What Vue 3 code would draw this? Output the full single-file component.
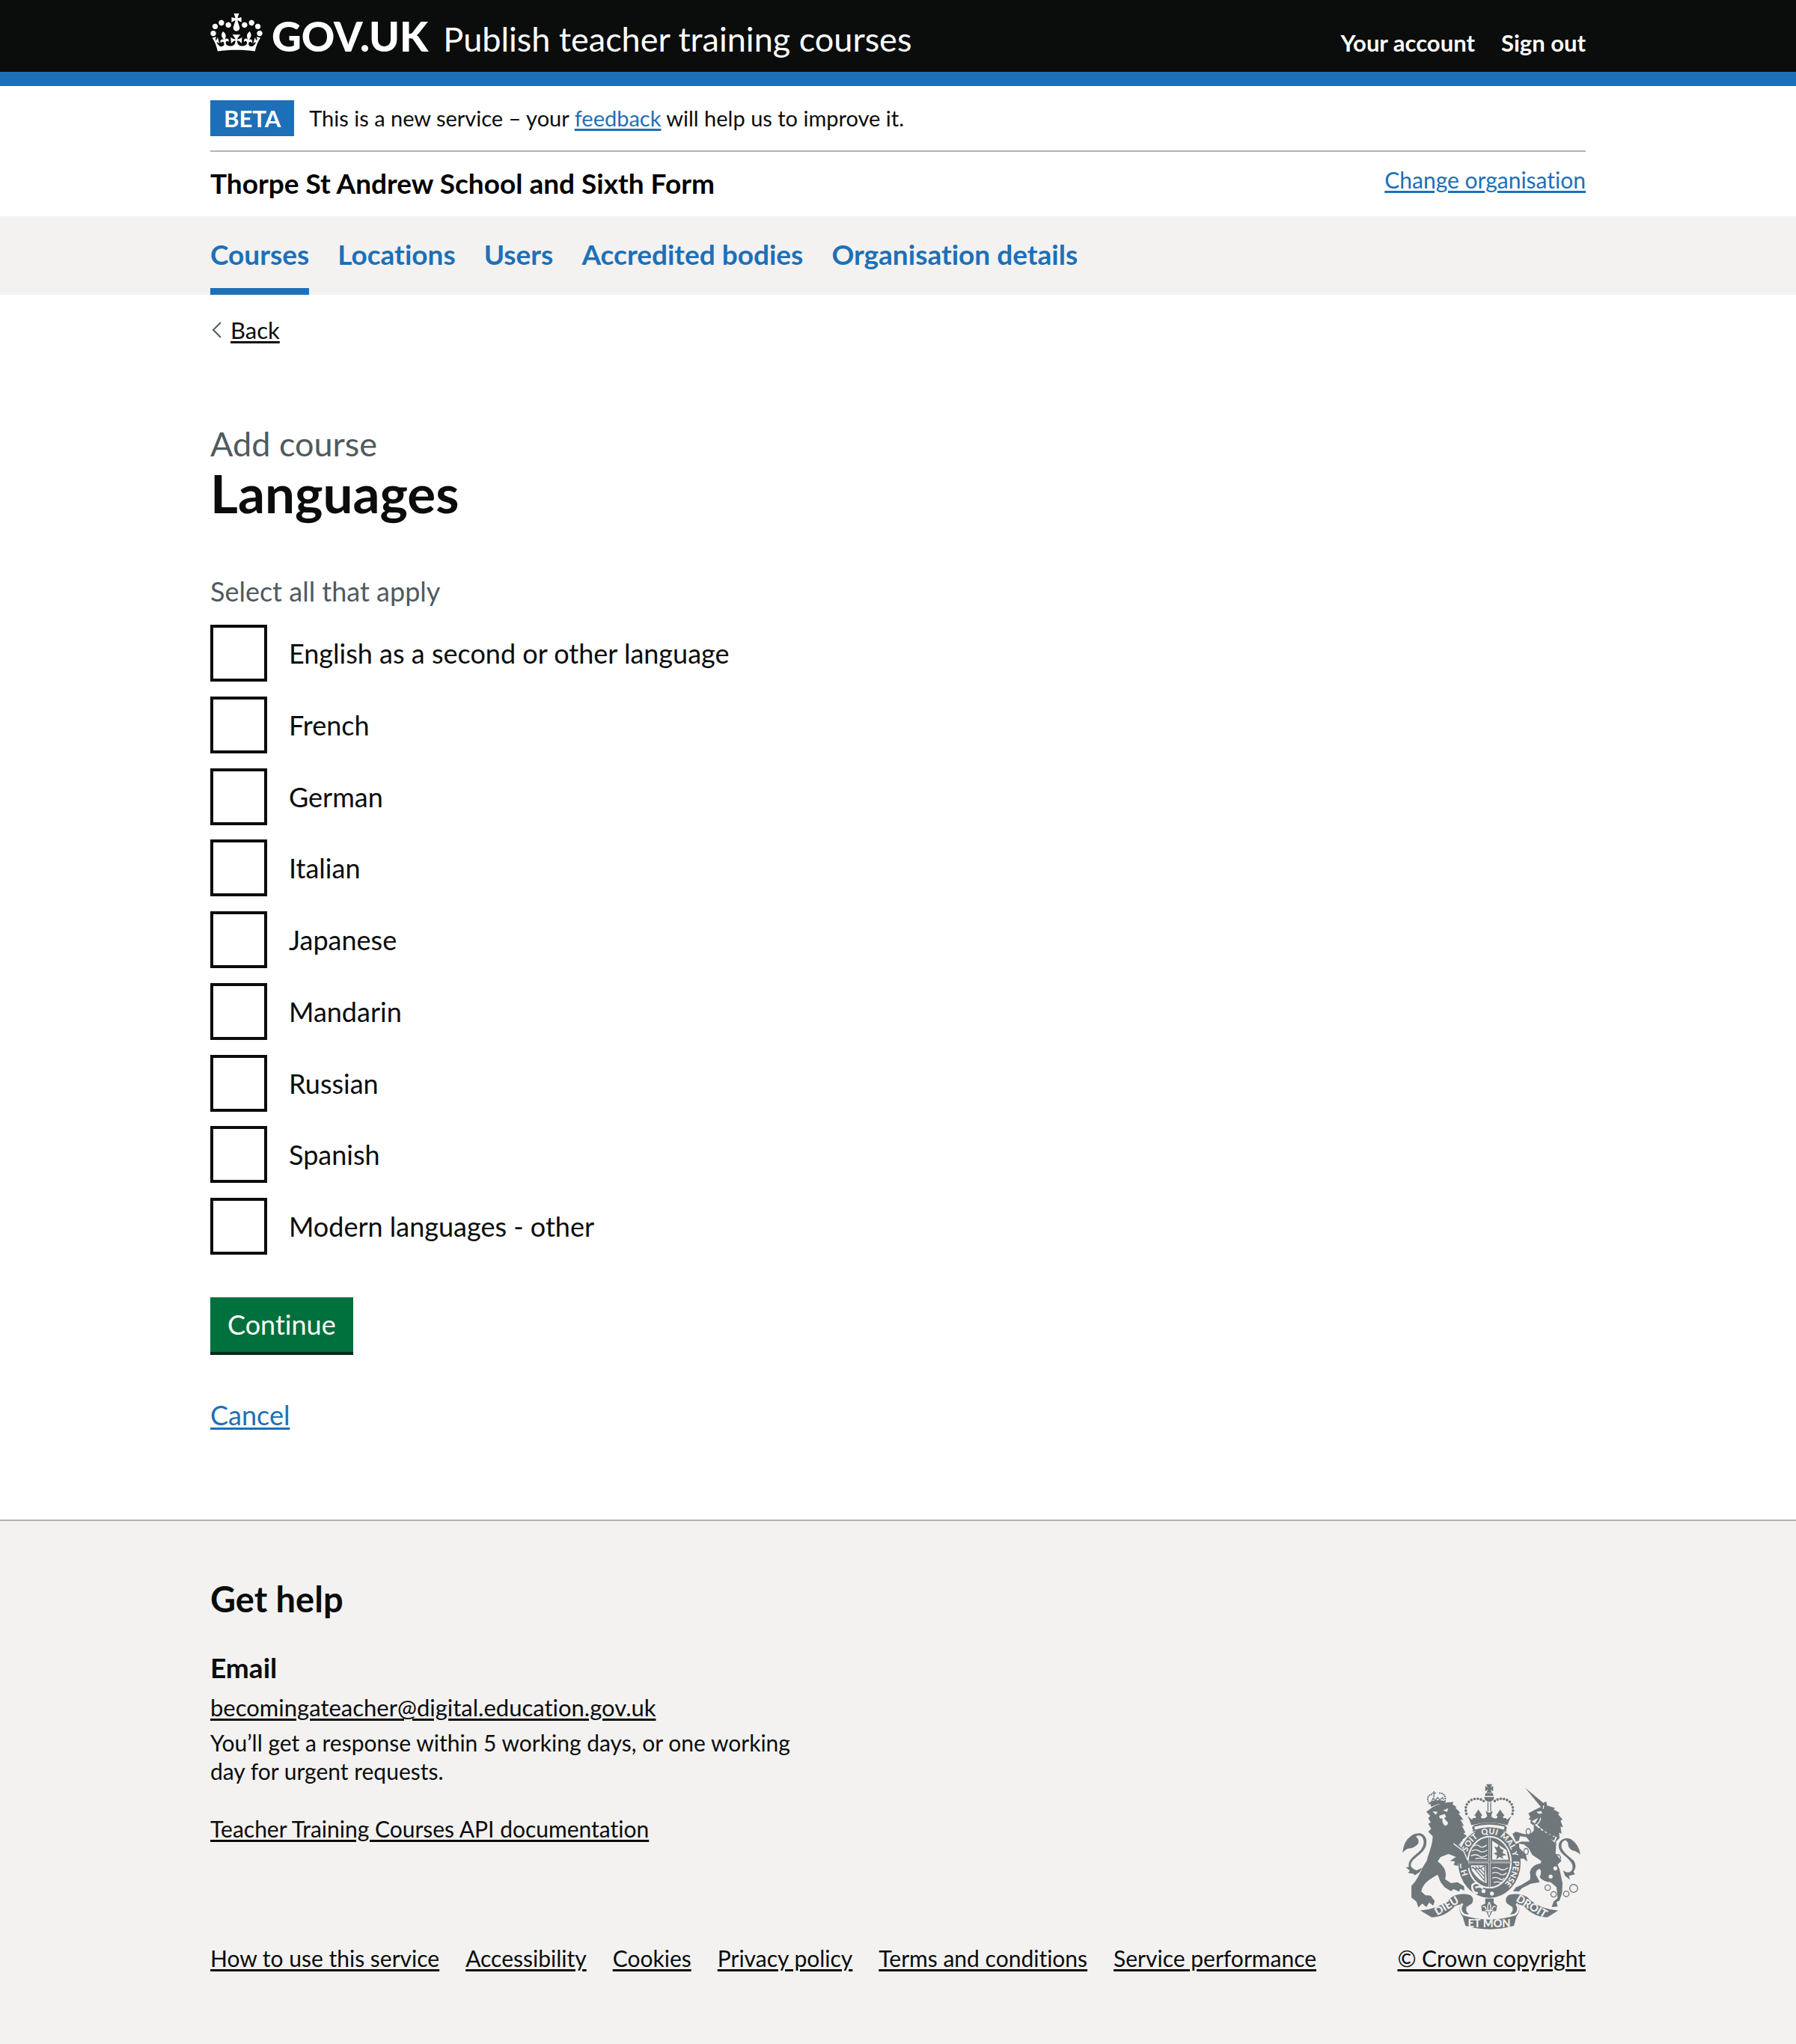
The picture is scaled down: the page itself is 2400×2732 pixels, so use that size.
<script setup>
import { ref } from 'vue'

const sections = ['Courses', 'Locations', 'Users', 'Accredited bodies', 'Organisation details']
const current = ref('Courses')

const languages = [
  'English as a second or other language',
  'French',
  'German',
  'Italian',
  'Japanese',
  'Mandarin',
  'Russian',
  'Spanish',
  'Modern languages - other',
]
const selected = ref([])

const footerLinks = [
  'How to use this service',
  'Accessibility',
  'Cookies',
  'Privacy policy',
  'Terms and conditions',
  'Service performance',
]
</script>

<template>
  <div class="page">
    <header class="header">
      <div class="container header-inner">
        <a href="#" class="logo">
          <svg class="crown" viewBox="0 0 132 97" aria-hidden="true">
            <path fill="currentColor" d="M25 30.2c3.5 1.5 7.7-.2 9.1-3.7 1.5-3.6-.2-7.8-3.9-9.2-3.6-1.4-7.6.3-9.1 3.9-1.4 3.5.3 7.5 3.9 9zM9 39.5c3.6 1.5 7.8-.2 9.2-3.7 1.5-3.6-.2-7.8-3.9-9.1-3.6-1.5-7.6.2-9.1 3.8-1.4 3.5.3 7.5 3.8 9zM4.4 57.2c3.5 1.5 7.7-.2 9.1-3.8 1.5-3.6-.2-7.7-3.9-9.1-3.5-1.5-7.6.3-9.1 3.8-1.4 3.5.3 7.6 3.9 9.1zm38.3-21.4c3.5 1.5 7.7-.2 9.1-3.8 1.5-3.6-.2-7.7-3.9-9.1-3.6-1.5-7.6.3-9.1 3.8-1.3 3.6.4 7.7 3.9 9.1zm64.4-5.6c-3.6 1.5-7.8-.2-9.1-3.7-1.5-3.6.2-7.8 3.8-9.2 3.6-1.4 7.7.3 9.2 3.9 1.3 3.5-.4 7.5-3.9 9zm15.9 9.3c-3.6 1.5-7.7-.2-9.1-3.7-1.5-3.6.2-7.8 3.7-9.1 3.6-1.5 7.7.2 9.2 3.8 1.5 3.5-.3 7.5-3.8 9zm4.7 17.7c-3.6 1.5-7.8-.2-9.2-3.8-1.5-3.6.2-7.7 3.9-9.1 3.6-1.5 7.7.3 9.2 3.8 1.3 3.5-.4 7.6-3.9 9.1zM89.3 35.8c-3.6 1.5-7.8-.2-9.2-3.8-1.4-3.6.2-7.7 3.9-9.1 3.6-1.5 7.7.3 9.2 3.8 1.4 3.6-.3 7.7-3.9 9.1zM69.7 17.7l8.9 4.7V9.3l-8.9 2.8c-.2-.3-.5-.6-.9-.9L72.4 0H59.6l3.5 11.2c-.3.3-.6.5-.9.9l-8.8-2.8v13.1l8.8-4.7c.3.3.6.7.9.9l-5 15.4v.1c-.2.8-.4 1.6-.4 2.4 0 4.1 3.1 7.5 7 8.1h.2c.3 0 .7.1 1 .1.4 0 .7 0 1-.1h.2c4-.6 7.1-4.1 7.1-8.1 0-.8-.1-1.7-.4-2.4V34l-5.1-15.4c.4-.2.7-.6 1-.9zM66 92.8c16.9 0 32.8 1.1 47.1 3.2 4-16.9 8.9-26.7 14-33.5l-9.6-3.4c1 4.9 1.1 7.2 0 10.2-1.5-1.4-3-4.3-4.2-8.7L108.6 76c2.8-2 5-3.2 7.5-3.3-4.4 9.4-10 11.9-13.6 11.2-4.3-.8-6.3-4.6-5.6-7.9 1-4.7 5.7-5.9 8-.5 4.3-8.7-3-11.4-7.6-8.8 7.1-7.2 7.9-13.5 2.1-21.1-8 6.1-8.1 12.3-4.5 20.8-4.7-5.4-12.1-2.5-9.5 6.2 3.4-5.2 7.9-2 7.2 3.1-.6 4.3-6.4 7.8-13.5 7.2-10.3-.9-10.9-8-11.2-13.8 2.5-.5 7.1 1.8 11 7.3L80.2 60c-4.1 4.4-8 5.3-12.3 5.4 1.4-4.4 8-11.6 8-11.6H55.5s6.4 7.2 7.9 11.6c-4.2-.1-8-1-12.3-5.4l1.4 16.4c3.9-5.5 8.5-7.7 10.9-7.3-.3 5.8-.9 12.8-11.1 13.8-7.2.6-12.9-2.9-13.5-7.2-.7-5 3.8-8.3 7.1-3.1 2.7-8.7-4.6-11.6-9.4-6.2 3.7-8.5 3.6-14.7-4.6-20.8-5.8 7.6-5 13.9 2.2 21.1-4.7-2.6-11.9.1-7.7 8.8 2.3-5.5 7.1-4.2 8.1.5.7 3.3-1.3 7.1-5.7 7.9-3.5.7-9-1.8-13.5-11.2 2.5.1 4.7 1.3 7.5 3.3l-4.7-15.4c-1.2 4.4-2.7 7.2-4.3 8.7-1.1-3-.9-5.3 0-10.2l-9.5 3.4c5 6.9 9.9 16.7 14 33.5 14.8-2.1 30.8-3.2 47.7-3.2z" />
          </svg>
          <span class="logo-text">GOV.UK</span>
        </a>
        <a href="#" class="service-name">Publish teacher training courses</a>
        <nav class="account" aria-label="Account">
          <a href="#">Your account</a>
          <a href="#">Sign out</a>
        </nav>
      </div>
    </header>

    <div class="container">
      <div class="phase">
        <strong class="tag">BETA</strong>
        <span>This is a new service – your <a href="#" class="link">feedback</a> will help us to improve it.</span>
      </div>
      <div class="organisation">
        <strong class="organisation-name">Thorpe St Andrew School and Sixth Form</strong>
        <a href="#" class="link">Change organisation</a>
      </div>
    </div>

    <nav class="sections" aria-label="Organisation">
      <div class="container sections-inner">
        <a
          v-for="name in sections"
          :key="name"
          href="#"
          class="section-link"
          :class="{ current: name === current }"
          @click.prevent="current = name"
        >{{ name }}</a>
      </div>
    </nav>

    <main class="container main">
      <a href="#" class="back">
        <svg class="chevron" viewBox="0 0 14 22" aria-hidden="true">
          <path d="M12 1L2 11L12 21" fill="none" stroke="currentColor" stroke-width="2" />
        </svg>
        <span class="back-text">Back</span>
      </a>

      <form @submit.prevent>
        <fieldset class="fieldset" aria-describedby="languages-hint">
          <legend class="legend">
            <span class="caption">Add course</span>
            <h1 class="title">Languages</h1>
          </legend>
          <p id="languages-hint" class="hint">Select all that apply</p>
          <div class="options">
            <div v-for="(name, i) in languages" :key="name" class="option">
              <input :id="`language-${i}`" v-model="selected" type="checkbox" :value="name" class="box" />
              <label :for="`language-${i}`" class="option-label">{{ name }}</label>
            </div>
          </div>
        </fieldset>
        <button type="submit" class="button">Continue</button>
      </form>
      <p class="cancel"><a href="#" class="link">Cancel</a></p>
    </main>

    <footer class="footer">
      <div class="container footer-inner">
        <div class="footer-main">
          <h2 class="help-title">Get help</h2>
          <h3 class="email-title">Email</h3>
          <p class="email"><a href="#" class="footer-link">becomingateacher@digital.education.gov.uk</a></p>
          <p class="response">You’ll get a response within 5 working days, or one working day for urgent requests.</p>
          <p class="docs"><a href="#" class="footer-link">Teacher Training Courses API documentation</a></p>
          <nav class="footer-nav" aria-label="Support links">
            <a v-for="name in footerLinks" :key="name" href="#" class="footer-link">{{ name }}</a>
          </nav>
        </div>

        <div class="copyright">
          <svg class="arms" viewBox="40 38 722 592" role="img" aria-label="Royal coat of arms">
            <defs>
              <path id="garter-line" d="M393 468 A96 113 0 0 1 393 242 A96 113 0 0 1 393 468" />
            </defs>

            <!-- crown above the shield -->
            <g class="ink">
              <path d="M380 40H404L398 53L408 47V69L398 62L402 74H382L386 62L376 69V47L386 53Z" />
              <path d="M378 76H406L410 88H374ZM372 92H412Q410 110 392 111Q374 110 372 92Z" />
              <path d="M304 168L322 184Q326 172 336 178Q342 168 332 166Q340 156 348 142Q358 156 364 166Q354 170 362 178Q376 180 384 170L378 148L392 156L406 148L400 170Q408 180 422 178Q430 170 420 166Q428 156 436 142Q444 156 454 166Q444 170 450 178Q460 172 464 184L482 168Q472 186 466 206Q392 184 320 206Q314 186 304 168Z" />
              <path d="M330 206Q392 186 456 206L464 216Q458 226 462 232Q392 214 324 232Q330 224 322 216Z" />
            </g>
            <path class="cut" d="M332 212Q392 194 454 212L452 224Q392 206 334 224Z" />
            <path class="beads" d="M300 160C288 118 318 98 344 99Q362 100 374 112M486 160C496 118 466 98 440 99Q422 100 410 112" />
            <path class="line" d="M387 112V150M398 112V150" />

            <!-- garter -->
            <ellipse class="ink" cx="393" cy="357" rx="126" ry="142" />
            <ellipse class="cut" cx="393" cy="355" rx="90" ry="106" />
            <ellipse class="ink" cx="393" cy="355" rx="84" ry="100" />
            <path class="thin-cut" d="M326 292Q340 280 352 290T382 286M322 310Q338 300 352 310T384 306M318 330Q338 320 352 330T384 326M336 342Q350 336 384 342M404 380Q420 372 434 382T468 378M404 400Q420 392 434 402T462 398M404 420Q420 412 434 422T452 418M410 438Q424 432 440 438" />
            <path class="cut" d="M404 268L462 306L470 345H404Z" />
            <path class="ink" d="M412 290L424 296L430 284L438 300L450 306L446 318L462 326L444 330L450 342L434 334L420 344L424 328L410 320L424 314Z" />
            <path class="cut" d="M318 368H378L382 440Q345 428 322 388Z" />
            <path class="line" d="M326 374L372 428M336 372L374 414M348 372L376 400M374 368V434M322 376Q346 392 372 370" />
            <path class="cut-line" d="M393 250V460M304 355H482" />
            <path class="line" d="M393 254V456M308 355H480" />
            <g class="lettering garter-text">
              <text><textPath href="#garter-line" startOffset="21%">HO</textPath></text>
              <text><textPath href="#garter-line" startOffset="37%">SOIT</textPath></text>
              <text><textPath href="#garter-line" startOffset="50%">QUI</textPath></text>
              <text><textPath href="#garter-line" startOffset="62%">MAL</textPath></text>
              <text><textPath href="#garter-line" startOffset="70%">Y</textPath></text>
              <text><textPath href="#garter-line" startOffset="82%">PENSE</textPath></text>
            </g>
            <path class="cut-line" d="M346 440Q318 438 324 462Q330 484 346 478M336 458Q360 448 366 462" />
            <circle class="cut" cx="369" cy="472" r="8" />
            <circle class="cut" cx="403" cy="482" r="8" />

            <!-- lion -->
            <g class="ink">
              <path d="M158 132L152 112Q184 98 216 110L212 120Q184 116 158 132Z" />
              <path d="M138 152L162 134Q200 112 248 112L244 122L260 132L256 136L276 156L268 158L288 184L276 184L290 208L282 208L296 236L288 238L302 250L286 262L274 290L292 312L306 350L312 376L298 386L276 380L290 372L268 352L266 370L248 366L254 352L234 350L258 334L228 322L196 334L184 352C212 372 222 396 214 424L238 440L264 436L290 452L292 470L276 462L270 474L248 464L238 472L212 456L196 436L184 406C150 424 122 444 118 474L134 488L156 490L172 512L166 530L150 518L138 536L122 522L106 538L98 514L78 498V450C108 424 112 388 140 350C150 310 164 284 164 250L146 232L158 220L146 200L156 194L146 178L154 168Z" />
              <path d="M42 318Q46 270 78 248Q92 238 112 238Q144 246 138 284C130 322 84 334 76 362Q72 378 98 388L122 378L110 396L92 408L86 402L64 398L72 390L56 376L68 374C62 344 94 328 116 306Q136 278 122 254Q106 242 96 252Q110 262 106 280Q90 300 66 300Q52 304 42 318Z" />
            </g>
            <path class="cut" d="M164 150L184 152L176 164ZM206 146L226 138L222 152ZM190 168L212 160L218 172L210 178L226 196Q222 212 210 206Q200 190 204 180L192 178Z" />
            <path class="thin-cut" d="M248 280L290 312L304 346M284 270L270 288" />
            <path class="beads small" d="M150 118Q132 84 168 80M214 108Q220 74 184 76" />
            <path class="line" d="M169 68V92M162 76H178M160 108L166 96L174 106L184 94L192 104L204 94L208 104" />

            <!-- unicorn -->
            <g class="ink">
              <path d="M536 54L616 120L602 134Z" />
              <path d="M550 158L576 144L604 130Q608 114 622 110L626 126L658 136L652 142L676 156L670 162L688 182L680 188L690 214L680 212L684 240L674 236L676 258L662 272L662 290L660 320L684 350L668 364L676 384L688 440L686 480L676 510L664 516L668 534L644 536L652 514L668 500L664 456L640 436Q612 434 596 416Q606 392 596 382Q580 384 580 404L596 436L560 442L524 460L512 474L488 472L500 456L520 448L556 426Q560 416 556 396Q562 366 600 360L602 350L566 326L552 300L534 284L512 280L514 298L540 324L546 352L530 340L518 342L498 300L500 282L520 272L556 272L542 254L516 250L512 268L500 272L486 240L500 232L528 240L554 244L572 228L572 206L590 176L564 190L578 200L568 206L558 196L560 184L550 182L558 174Z" />
              <path d="M760 326Q754 282 722 262Q698 252 680 268Q664 288 680 312C694 332 736 352 728 382Q722 398 704 396L690 388L698 410L718 426L714 410L738 404L732 394Q748 372 734 350C714 330 692 318 684 296Q680 272 700 266L710 276Q708 300 730 308Q750 312 760 326Z" />
            </g>
            <path class="cut" d="M576 204L656 276L666 254Q620 238 582 200Z" />
            <path class="ink" d="M584 210L588 220L598 216L604 230L614 224L620 238L632 232L636 246L648 240L650 254L660 250L654 268Q612 252 578 226Z" />
            <path class="cut" d="M582 152L602 148L606 158L594 160Z" />
            <path class="thin-cut" d="M600 176Q596 198 580 206M612 126L610 140" />
            <g class="ring">
              <ellipse cx="550" cy="232" rx="9" ry="12" />
              <ellipse cx="541" cy="312" rx="9" ry="12" />
              <circle cx="668" cy="337" r="12" />
              <circle cx="628" cy="458" r="11" />
              <circle cx="652" cy="485" r="11" />
              <circle cx="703" cy="483" r="11" />
              <circle cx="733" cy="461" r="16" />
            </g>
            <circle class="cut" cx="659" cy="380" r="8" />
            <circle class="cut" cx="640" cy="413" r="8" />

            <!-- motto ribbon -->
            <g class="ink">
              <path d="M114 550Q196 544 240 496Q276 476 316 488Q334 502 322 522L300 536Q296 556 310 564L284 574Q264 548 278 524L254 532Q216 576 160 578L140 566Z" />
              <path d="M670 550Q588 544 546 496Q510 476 470 488Q452 502 464 522L486 536Q490 556 476 564L502 574Q522 548 508 524L532 532Q570 576 626 578L646 566Z" />
              <path d="M280 558Q392 606 506 558L492 612Q392 640 296 612Z" />
              <path d="M376 502H410V520L424 530L420 552L404 554L392 580L380 554L362 552L360 530L376 522Z" />
            </g>
            <path class="cut-line" d="M284 522Q268 548 288 566Q392 600 498 566Q518 548 502 522" />
            <path class="thin-cut" d="M392 516Q380 536 392 568Q404 536 392 516M366 536Q376 528 380 546M418 536Q408 528 404 546M376 550H408" />
            <g class="lettering motto">
              <text transform="translate(228 544) rotate(-31)">DIEU</text>
              <text x="392" y="617">ET MON</text>
              <text transform="translate(556 546) rotate(31)">DROIT</text>
            </g>
          </svg>
          <a href="#" class="footer-link">© Crown copyright</a>
        </div>
      </div>
    </footer>
  </div>
</template>

<style>
body {
  margin: 0;
  background: #f3f2f1;
}
</style>

<style scoped>
.page {
  background: #ffffff;
  color: #0b0c0c;
  font-family: Lato, "Liberation Sans", sans-serif;
  font-size: 30px;
  font-variant-ligatures: none;
  line-height: 38px;
}

p,
h1,
h2,
h3 {
  margin: 0;
}

a {
  color: inherit;
  text-decoration: none;
}

.container {
  box-sizing: border-box;
  width: calc(100% - 64px);
  max-width: 1838px;
  margin: 0 auto;
}

.link,
.footer-link,
.back-text {
  text-decoration: underline;
  text-decoration-thickness: 3px;
  text-underline-offset: 3px;
}

.link {
  color: #1d70b8;
}

.header {
  background: #0b0c0c;
  border-bottom: 19px solid #1d70b8;
  color: #ffffff;
}

.header-inner {
  display: flex;
  align-items: baseline;
  padding: 18px 0 20px;
}

.logo {
  display: flex;
  align-items: baseline;
  gap: 12px;
}

.crown {
  width: 70px;
  height: 51px;
  margin-bottom: -3px;
}

.logo-text {
  font-size: 55px;
  font-weight: 900;
  line-height: 56px;
}

.service-name {
  margin-left: 20px;
  font-size: 45px;
  line-height: 48px;
}

.account {
  display: flex;
  gap: 35px;
  margin-left: auto;
  font-size: 31px;
  font-weight: 700;
  line-height: 36px;
}

.phase {
  display: flex;
  align-items: center;
  gap: 20px;
  padding: 19px 0;
  border-bottom: 2px solid #b1b4b6;
  font-size: 29px;
}

.tag {
  padding: 5px 18px;
  background: #1d70b8;
  color: #ffffff;
  font-size: 31px;
}

.organisation {
  display: flex;
  justify-content: space-between;
  padding: 18px 0 20px;
}

.organisation-name {
  color: #000000;
  font-size: 37px;
  line-height: 48px;
}

.sections {
  background: #f3f2f1;
}

.sections-inner {
  display: flex;
  gap: 38px;
}

.section-link {
  padding: 27px 0 21px;
  border-bottom: 9px solid transparent;
  color: #1d70b8;
  font-size: 37px;
  font-weight: 700;
  line-height: 48px;
}

.section-link.current {
  border-color: #1d70b8;
}

.main {
  padding: 28px 0 116px;
}

.back {
  display: inline-flex;
  align-items: center;
  gap: 11px;
  font-size: 31px;
  vertical-align: top;
}

.chevron {
  width: 14px;
  height: 22px;
  margin-left: 2px;
  color: #505a5f;
}

.fieldset {
  margin: 104px 0 57px;
  padding: 0;
  border: 0;
}

.legend {
  padding: 0;
}

.caption {
  display: block;
  color: #505a5f;
  font-size: 45px;
  line-height: 58px;
}

.title {
  font-size: 71px;
  line-height: 74px;
}

.hint {
  margin-top: 70px;
  color: #505a5f;
  font-size: 36px;
  line-height: 48px;
}

.options {
  display: flex;
  flex-direction: column;
  justify-content: space-between;
  min-height: 842px;
  margin-top: 21px;
}

.option {
  display: flex;
  align-items: center;
}

.box {
  appearance: none;
  box-sizing: border-box;
  width: 76px;
  height: 76px;
  margin: 0;
  border: 4px solid #0b0c0c;
  background: #ffffff;
}

.box:checked {
  box-shadow: inset 0 0 0 12px #ffffff;
  background: #0b0c0c;
}

.option-label {
  padding: 0 29px;
  font-size: 36px;
  line-height: 48px;
}

.button {
  display: block;
  margin: 0;
  padding: 12px 23px 13px;
  border: 0;
  box-shadow: 0 4px 0 #002d18;
  background: #00703c;
  color: #ffffff;
  font-family: inherit;
  font-size: 36px;
  font-variant-ligatures: inherit;
  line-height: 48px;
}

.cancel {
  margin-top: 60px;
  font-size: 36px;
  line-height: 48px;
}

.footer {
  border-top: 2px solid #b1b4b6;
  background: #f3f2f1;
}

.footer-inner {
  display: flex;
  align-items: flex-end;
  justify-content: space-between;
  padding: 75px 0 97px;
}

.help-title {
  font-size: 47px;
  line-height: 58px;
}

.email-title {
  margin-top: 39px;
  font-size: 37px;
  line-height: 48px;
}

.email {
  margin-top: 10px;
  font-size: 31px;
}

.response {
  max-width: 800px;
  margin-top: 9px;
}

.docs {
  margin-top: 39px;
}

.footer-nav {
  display: flex;
  flex-wrap: wrap;
  gap: 0 35px;
  margin-top: 135px;
}

.copyright {
  display: flex;
  flex-direction: column;
  align-items: center;
  gap: 18px;
}

.arms {
  width: 240px;
  height: 196px;
}

.ink {
  fill: #6f777b;
}

.cut {
  fill: #f3f2f1;
}

.line {
  fill: none;
  stroke: #6f777b;
  stroke-width: 4;
}

.cut-line {
  fill: none;
  stroke: #f3f2f1;
  stroke-width: 8;
}

.thin-cut {
  fill: none;
  stroke: #f3f2f1;
  stroke-width: 4;
}

.beads {
  fill: none;
  stroke: #6f777b;
  stroke-width: 11;
  stroke-linecap: round;
  stroke-dasharray: 0 13;
}

.beads.small {
  stroke-width: 7;
  stroke-dasharray: 0 9;
}

.ring {
  fill: none;
  stroke: #6f777b;
  stroke-width: 4;
}

.lettering {
  fill: #f3f2f1;
  font-weight: 900;
  text-anchor: middle;
}

.garter-text {
  font-size: 33px;
}

.motto {
  font-size: 44px;
}
</style>
